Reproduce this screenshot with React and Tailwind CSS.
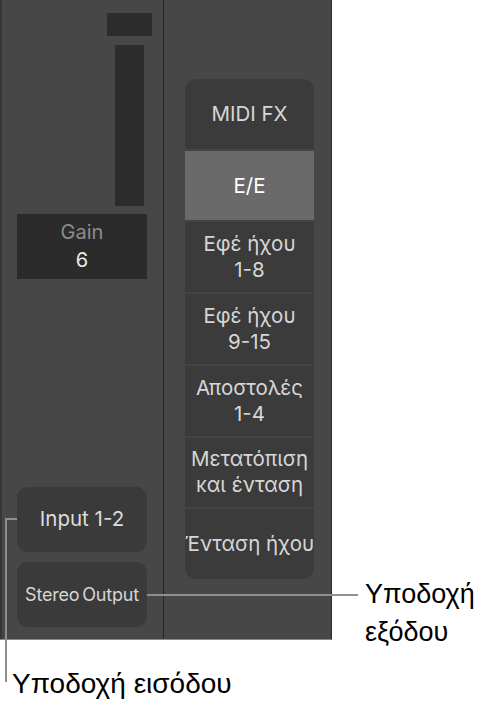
import React from "react";

const ui = { fontFamily: "Inter, 'Noto Sans', sans-serif" };
const lab = { fontFamily: "'Liberation Sans', Arial, sans-serif" };

function Cell({ children, active }) {
  return (
    <div
      className={
        "flex-1 flex items-center justify-center text-center text-[20.5px] leading-[26px] whitespace-nowrap " +
        (active ? "bg-[#6a6a6a] text-white" : "bg-[#3b3b3b] text-[#d6d6d6]")
      }
    >
      <div>{children}</div>
    </div>
  );
}

export default function App() {
  return (
    <div className="relative w-[495px] h-[705px] bg-white overflow-hidden" style={ui}>
      <div className="flex w-[332px] h-[640px] bg-[#474747] border-r border-b border-r-[#2e2e2e] border-b-[#8a8a8a]">
        {/* left strip */}
        <div className="flex flex-col w-[164px] border-l-2 border-l-[#363636] border-r border-r-[#262626]">
          <div className="ml-[105px] mt-[13px] w-[45px] h-[23px] bg-[#2c2c2c]" />
          <div className="ml-[113px] mt-[9px] w-[29px] h-[161px] bg-[#2c2c2c]" />
          <div className="ml-[15px] mt-[8px] w-[130px] h-[65px] bg-[#2b2b2b] flex flex-col items-center justify-center">
            <div className="text-[20px] leading-[28px] text-[#8c8c8c] -mt-[2px]">Gain</div>
            <div className="text-[20px] leading-[28px] text-[#ececec]">6</div>
          </div>
          <div className="flex-1" />
          <div className="ml-[15px] w-[130px] h-[65px] rounded-[11px] bg-[#3a3a3a] flex items-center justify-center text-[20.5px] text-[#dcdcdc]">
            Input 1-2
          </div>
          <div className="ml-[15px] mt-[10px] mb-[12px] w-[130px] h-[65px] rounded-[11px] bg-[#3a3a3a] flex items-center justify-center text-[18px] tracking-[-0.2px] [word-spacing:-2px] text-[#d6d6d6] whitespace-nowrap">
            Stereo Output
          </div>
        </div>
        {/* right strip */}
        <div className="flex-1 pl-[21px] pt-[79px]">
          <div className="flex flex-col gap-[2px] w-[129px] h-[500px] rounded-[12px] overflow-hidden bg-[#444444]">
            <Cell>MIDI FX</Cell>
            <Cell active>E/E</Cell>
            <Cell>Εφέ ήχου<br />1-8</Cell>
            <Cell>Εφέ ήχου<br />9-15</Cell>
            <Cell>Αποστολές<br />1-4</Cell>
            <Cell>Μετατόπιση<br />και ένταση</Cell>
            <Cell>Ένταση ήχου</Cell>
          </div>
        </div>
      </div>

      {/* callout: output */}
      <div className="absolute left-[147px] top-[594px] w-[211px] h-[2px] bg-[#8f8f8f]" />
      <div className="absolute left-[365px] top-[575px] text-[27px] leading-[38px] text-black" style={lab}>
        Υποδοχή<br />εξόδου
      </div>

      {/* callout: input */}
      <div className="absolute left-[5px] top-[518px] w-[12px] h-[2px] bg-[#8f8f8f]" />
      <div className="absolute left-[5px] top-[518px] w-[2px] h-[164px] bg-[#8f8f8f]" />
      <div className="absolute left-[12px] top-[665px] text-[28px] leading-[38px] text-black whitespace-nowrap" style={lab}>
        Υποδοχή εισόδου
      </div>
    </div>
  );
}
